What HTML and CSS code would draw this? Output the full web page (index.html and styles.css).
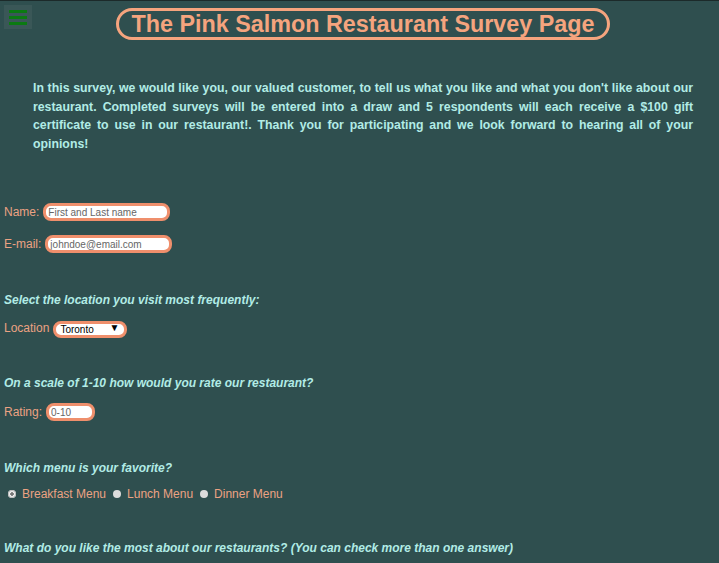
FILE: index.html
```html
<!DOCTYPE html>
<html lang="en">
<head>
<meta charset="utf-8">
<title>The Pink Salmon Restaurant Survey Page</title>
<link rel="stylesheet" href="styles.css">
</head>
<body>
<header class="top">
  <button class="menu-btn" aria-label="Menu">
    <span class="bar"></span><span class="bar"></span><span class="bar"></span>
  </button>
  <h1 class="title">The Pink Salmon Restaurant Survey Page</h1>
</header>
<p class="intro">In this survey, we would like you, our valued customer, to tell us what you like and what you don't like about our restaurant. Completed surveys will be entered into a draw and 5 respondents will each receive a $100 gift certificate to use in our restaurant!. Thank you for participating and we look forward to hearing all of your opinions!</p>
<form class="survey">
  <div class="row row-name"><label class="lbl" for="name">Name:</label><input class="field field-text" id="name" type="text" placeholder="First and Last name"></div>
  <div class="row row-email"><label class="lbl" for="email">E-mail:</label><input class="field field-text" id="email" type="email" placeholder="johndoe@email.com"></div>
  <div class="question q1">Select the location you visit most frequently:</div>
  <div class="row row-loc"><label class="lbl" for="loc">Location</label><span class="select-wrap"><select class="field field-select" id="loc"><option>Toronto</option></select></span></div>
  <div class="question q2">On a scale of 1-10 how would you rate our restaurant?</div>
  <div class="row row-rate"><label class="lbl" for="rate">Rating:</label><input class="field field-rate" id="rate" type="text" placeholder="0-10"></div>
  <div class="question q3">Which menu is your favorite?</div>
  <div class="row row-radio">
    <input class="radio radio-first" type="radio" name="menu" id="m1" checked><label class="lbl rlbl" for="m1">Breakfast Menu</label>
    <input class="radio" type="radio" name="menu" id="m2"><label class="lbl rlbl" for="m2">Lunch Menu</label>
    <input class="radio" type="radio" name="menu" id="m3"><label class="lbl rlbl" for="m3">Dinner Menu</label>
  </div>
  <div class="question q4">What do you like the most about our restaurants? (You can check more than one answer)</div>
</form>
</body>
</html>
```
FILE: styles.css
```css
html, body {
  margin: 0;
  padding: 0;
}
body {
  background: #2f4f4f;
  border-top: 1px solid #1c2a2a;
  font-family: "Liberation Sans", Arial, sans-serif;
  min-height: 562px;
  overflow: hidden;
}
.top {
  position: relative;
  text-align: center;
  padding-top: 7px;
  height: 33px;
}
.menu-btn {
  position: absolute;
  left: 4px;
  top: 4px;
  width: 28px;
  height: 24px;
  padding: 0;
  border: none;
  background: #3a5757;
  display: flex;
  flex-direction: column;
  align-items: center;
  justify-content: center;
  gap: 3px;
}
.bar {
  display: block;
  width: 18px;
  height: 3px;
  background: #0b7a12;
}
.title {
  display: inline-block;
  margin: 0 0 0 7px;
  padding: 0 12px;
  font-size: 23.35px;
  line-height: 26px;
  font-weight: bold;
  color: #f5a47e;
  border: 3px solid #f5a47e;
  border-radius: 17px;
}
.intro {
  margin: 38px 26px 0 33px;
  font-size: 12.3px;
  line-height: 18.5px;
  font-weight: bold;
  color: #b2ece6;
  text-align: justify;
}
.survey {
  padding: 0 4px;
}
.row {
  display: flex;
  align-items: center;
  height: 22px;
}
.row-name { margin-top: 48px; }
.row-email { margin-top: 10px; }
.row-loc { margin-top: 8px; }
.row-rate { margin-top: 9px; }
.row-radio { margin-top: 6px; }
.lbl {
  font-size: 12px;
  color: #eca283;
  margin-right: 4px;
}
.question {
  height: 18px;
  line-height: 18px;
  font-size: 12px;
  font-weight: bold;
  font-style: italic;
  color: #b2ece6;
}
.q1 { margin-top: 36px; }
.q2 { margin-top: 35px; }
.q3 { margin-top: 36px; }
.q4 { margin-top: 34px; }
.field {
  box-sizing: border-box;
  height: 18px;
  border: 3px solid #ef8f6c;
  border-radius: 8px;
  background: #fff;
  font-family: "Liberation Sans", Arial, sans-serif;
  font-size: 10px;
  padding: 0 2px;
  color: #000;
  outline: none;
}
.field::placeholder { color: #666; }
.field-text { width: 127px; }
.field-rate { width: 49px; }
.select-wrap {
  position: relative;
  display: inline-block;
}
.field-select {
  -webkit-appearance: none;
  appearance: none;
  width: 74px;
  height: 17px;
  padding: 0 0 0 4px;
}
.select-wrap::after {
  content: "\25BC";
  position: absolute;
  right: 8px;
  top: 3px;
  font-size: 10px;
  line-height: 11px;
  color: #000;
  pointer-events: none;
}
.radio {
  -webkit-appearance: none;
  appearance: none;
  width: 8px;
  height: 8px;
  border-radius: 50%;
  background: #dcdcdc;
  margin: 0 6px 0 0;
  border: none;
}
.radio-first { margin-left: 4px; }
.rlbl { margin-right: 7px; }
.radio:checked {
  background: radial-gradient(circle, #777 0 1.5px, #f2f2f2 2px);
  box-shadow: 0 0 0 1px #bbb inset;
}
```
